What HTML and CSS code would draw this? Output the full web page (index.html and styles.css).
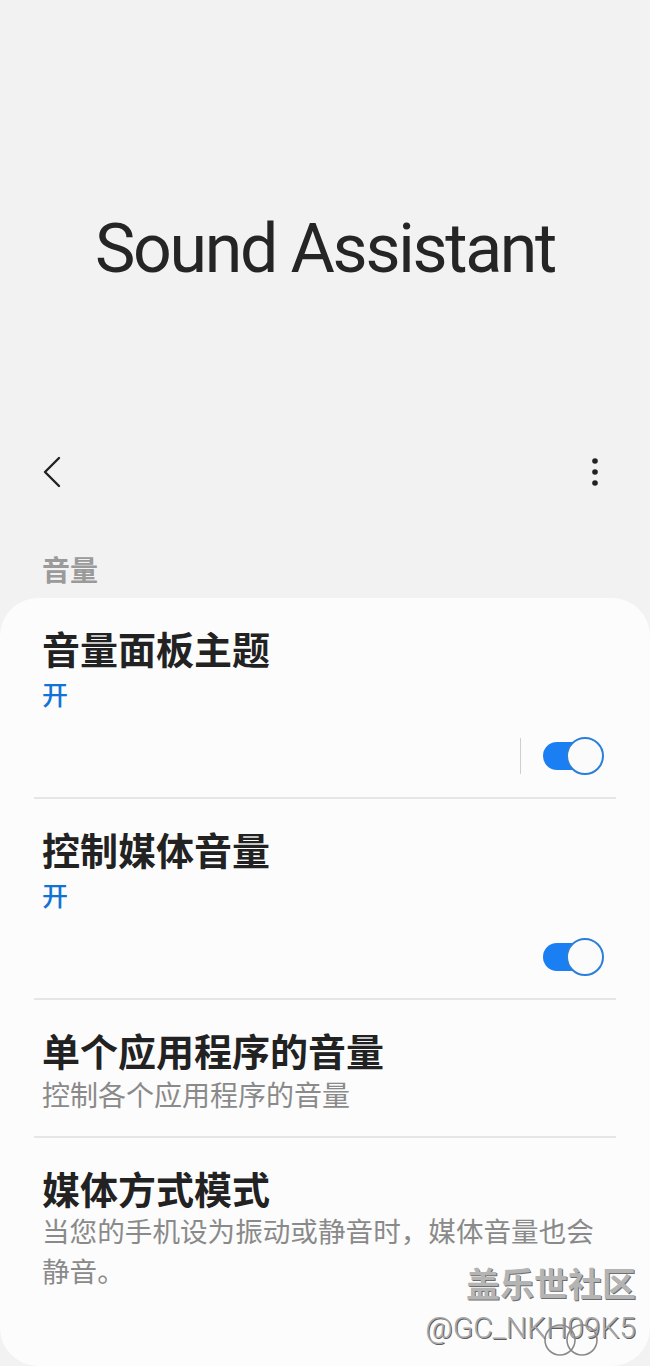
FILE: index.html
```html
<!DOCTYPE html>
<html lang="zh-CN">

<head>
    <meta charset="UTF-8">
    <title>Sound Assistant</title>
    <link rel="stylesheet" href="styles.css">
</head>

<body>
<div class="page">
    <div class="hero">
        <h1 class="hero-title">Sound Assistant</h1>
    </div>

    <div class="toolbar">
        <button class="icon-btn back-btn" aria-label="返回">
            <svg width="20" height="32" viewBox="0 0 20 32">
                <path d="M17 2 L3 16 L17 30" fill="none" stroke="#222" stroke-width="2.4" stroke-linecap="round" stroke-linejoin="round"/>
            </svg>
        </button>
        <button class="icon-btn more-btn" aria-label="更多">
            <svg width="8" height="30" viewBox="0 0 8 30">
                <circle cx="4" cy="4" r="2.8" fill="#222"/>
                <circle cx="4" cy="15" r="2.8" fill="#222"/>
                <circle cx="4" cy="26" r="2.8" fill="#222"/>
            </svg>
        </button>
    </div>

    <div class="section-label">音量</div>

    <div class="card">
        <!-- 音量面板主题 -->
        <div class="item">
            <div class="item-title">音量面板主题</div>
            <div class="item-status">开</div>
            <div class="switch-row">
                <span class="switch-divider"></span>
                <span class="switch on"><span class="switch-thumb"></span></span>
            </div>
        </div>
        <div class="divider"></div>

        <!-- 控制媒体音量 -->
        <div class="item">
            <div class="item-title">控制媒体音量</div>
            <div class="item-status">开</div>
            <div class="switch-row">
                <span class="switch on"><span class="switch-thumb"></span></span>
            </div>
        </div>
        <div class="divider"></div>

        <div class="item item-text">
            <div class="item-title">单个应用程序的音量</div>
            <div class="item-sub">控制各个应用程序的音量</div>
        </div>
        <div class="divider"></div>

        <div class="item item-last">
            <div class="item-title">媒体方式模式</div>
            <div class="item-desc">
                <span class="desc-line">当您的手机设为振动或静音时，媒体音量也会</span>
                <span class="desc-line">静音。</span>
            </div>
        </div>

        <!-- 水印 -->
        <div class="watermark">
            <div class="wm-name">盖乐世社区</div>
            <div class="wm-id">@GC_NKH09K5</div>
            <svg class="wm-logo" width="64" height="36" viewBox="0 0 64 36">
                <circle cx="20" cy="18" r="15" fill="none" stroke="#8a8a8a" stroke-width="1.6"/>
                <circle cx="42" cy="18" r="15" fill="none" stroke="#8a8a8a" stroke-width="1.6"/>
            </svg>
        </div>
    </div>
</div>
</body>

</html>
```

FILE: styles.css
```css
body {
    margin: 0;
    background-color: #f2f2f2;
    font-family: "Noto Sans CJK SC", "Noto Sans", sans-serif;
    color: #222;
}

.page {
    width: 650px;
    height: 1366px;
    overflow: hidden;
    display: flex;
    flex-direction: column;
}

.hero {
    height: 444px;
    box-sizing: border-box;
    padding-top: 214px;
}

.hero-title {
    margin: 0;
    text-align: center;
    font-family: Roboto, "Liberation Sans", sans-serif;
    font-weight: 400;
    font-size: 68px;
    line-height: 70px;
    color: #252525;
    letter-spacing: -2.3px;
}

.toolbar {
    height: 56px;
    display: flex;
    align-items: center;
    justify-content: space-between;
    padding: 0 51px 0 42px;
}

.icon-btn {
    background: none;
    border: none;
    padding: 0;
    display: flex;
    align-items: center;
    cursor: pointer;
}

.section-label {
    margin-top: 51px;
    padding: 0 42px;
    font-size: 28px;
    line-height: 36px;
    font-weight: 700;
    color: #9a9a9a;
}

.card {
    position: relative;
    margin-top: 11px;
    flex: 1;
    background-color: #fcfcfc;
    border-radius: 38px;
}

.item {
    padding: 24px 42px 22px;
}

.item-title {
    font-size: 38px;
    line-height: 52px;
    font-weight: 700;
    color: #222;
}

.item-status {
    margin-top: 2px;
    font-size: 26px;
    line-height: 36px;
    font-weight: 500;
    color: #1173d6;
}

.switch-row {
    margin-top: 25px;
    display: flex;
    align-items: center;
    justify-content: flex-end;
    gap: 22px;
    padding-right: 4px;
}

.switch-divider {
    width: 1px;
    height: 36px;
    background-color: #cfcfcf;
}

.switch {
    position: relative;
    width: 61px;
    height: 38px;
    display: inline-block;
}

.switch::before {
    content: "";
    position: absolute;
    left: 0;
    right: 4px;
    top: 5px;
    height: 28px;
    border-radius: 14px;
    background-color: #1a7ff2;
}

.switch-thumb {
    position: absolute;
    right: 0;
    top: 0;
    width: 34px;
    height: 34px;
    border: 2px solid #2a7fdb;
    border-radius: 50%;
    background-color: #fbfbfb;
}

.divider {
    height: 2px;
    margin: 0 34px;
    background-color: #e6e6e6;
}

.item-text {
    padding-bottom: 24px;
}

.item-sub {
    font-size: 28px;
    line-height: 36px;
    color: #8a8a8a;
}

.item-last {
    padding-top: 24px;
}

.item-desc {
    margin-top: -4px;
    font-size: 27.6px;
    line-height: 40px;
    color: #8a8a8a;
}

.desc-line {
    display: block;
    width: fit-content;
    white-space: nowrap;
}

.watermark {
    position: absolute;
    right: 14px;
    bottom: 18px;
    display: flex;
    flex-direction: column;
    align-items: flex-end;
}

.wm-name {
    font-size: 34px;
    line-height: 38px;
    font-weight: 700;
    color: #b4b4b4;
    text-shadow: 1px 1px 0 #6e6e6e;
}

.wm-id {
    margin-top: 6px;
    font-family: Roboto, "Liberation Sans", sans-serif;
    font-weight: 300;
    font-size: 30px;
    line-height: 40px;
    color: #a8a8a8;
    text-shadow: 1px 1px 0 #5e5e5e;
}

.wm-logo {
    position: absolute;
    right: 32px;
    bottom: -10px;
}
```
